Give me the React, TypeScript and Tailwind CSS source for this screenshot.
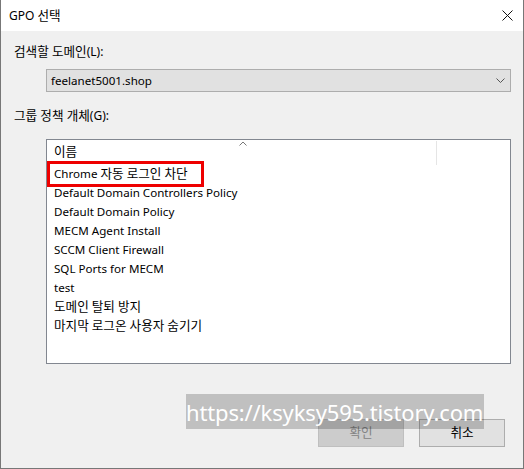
import React from "react";

const policies = [
  "Chrome 자동 로그인 차단",
  "Default Domain Controllers Policy",
  "Default Domain Policy",
  "MECM Agent Install",
  "SCCM Client Firewall",
  "SQL Ports for MECM",
  "test",
  "도메인 탈퇴 방지",
  "마지막 로그온 사용자 숨기기",
];

const font = "font-['Noto_Sans','Noto_Sans_CJK_KR',sans-serif]";

// Hangul glyphs in the original (Malgun Gothic) look larger than the Latin ones,
// so Korean runs get a slightly bigger size
const T: React.FC<{ text: string }> = ({ text }) => {
  const parts = text.split(/([\uac00-\ud7a3]+)/);
  return (
    <>
      {parts.map((s, i) =>
        /[\uac00-\ud7a3]/.test(s) ? (
          <span key={i} className="text-[12.6px]">
            {s}
          </span>
        ) : (
          <React.Fragment key={i}>{s}</React.Fragment>
        )
      )}
    </>
  );
};

export default function App() {
  return (
    <div
      className={`relative w-[524px] h-[469px] flex flex-col border-x border-b border-[#777] bg-[#f0f0f0] text-[11.6px] text-black ${font}`}
    >
      {/* Title bar */}
      <div className="h-[31px] bg-white flex items-center justify-between pl-[8px] pr-[10px]">
        <span className="leading-[16px] text-[12px]">
          <T text="GPO 선택" />
        </span>
        <svg width="11" height="11" viewBox="0 0 11 11">
          <path d="M0.5 0.5 L10.5 10.5 M10.5 0.5 L0.5 10.5" stroke="#111" strokeWidth="1" />
        </svg>
      </div>

      {/* Body */}
      <div className="flex-1 flex flex-col pl-[13px] pr-[12px]">
        <div className="mt-[13px] leading-[16px] text-[12px]">
          <T text="검색할 도메인(L):" />
        </div>

        <div className="mt-[9px] ml-[32px] h-[23px] border border-[#adadad] bg-[#e1e1e1] flex items-center justify-between pl-[4px] pr-[5px]">
          <span className="leading-[16px]">feelanet5001.shop</span>
          <svg width="9" height="5" viewBox="0 0 9 5">
            <path d="M0.5 0.5 L4.5 4.5 L8.5 0.5" stroke="#555" strokeWidth="1" fill="none" />
          </svg>
        </div>

        <div className="mt-[16px] leading-[16px] text-[12px]">
          <T text="그룹 정책 개체(G):" />
        </div>

        <div className="relative mt-[15px] ml-[32px] h-[225px] border border-[#828790] bg-white">
          {/* header */}
          <div className="relative h-[24px] flex items-center pl-[7px]">
            <span className="leading-[16px]">
              <T text="이름" />
            </span>
            <svg width="8" height="5" viewBox="0 0 8 5" className="absolute left-[192px] top-[1px]">
              <path d="M0.5 4.5 L4 1 L7.5 4.5" stroke="#777" strokeWidth="1" fill="none" />
            </svg>
            <div className="absolute left-[389px] top-[1px] h-[24px] w-px bg-[#e5e5e5]" />
          </div>
          {/* rows */}
          <div className="flex flex-col">
            {policies.map((p) => (
              <div key={p} className="h-[19px] flex items-center pl-[7px]">
                <span className="leading-[16px]">
                  <T text={p} />
                </span>
              </div>
            ))}
          </div>
          {/* red highlight */}
          <div className="absolute left-0 top-[21px] w-[157px] h-[26px] border-[3px] border-[#ee0000]" />
        </div>

        <div className="mt-[55px] flex justify-end gap-[15px] pr-[6px]">
          <div className="w-[86px] h-[28px] border border-[#bfbfbf] bg-[#cccccc] text-[#838383] flex items-center justify-center">
            <T text="확인" />
          </div>
          <div className="w-[86px] h-[28px] border border-[#adadad] bg-[#e1e1e1] flex items-center justify-center">
            <T text="취소" />
          </div>
        </div>
      </div>

      {/* watermark */}
      <div className="absolute left-[185px] top-[394px] w-[298px] h-[35px] bg-black/20 flex items-center overflow-hidden">
        <span className="text-white text-[22px] leading-[28px] tracking-[-0.15px] whitespace-nowrap">
          https://ksyksy595.tistory.com
        </span>
      </div>
    </div>
  );
}
